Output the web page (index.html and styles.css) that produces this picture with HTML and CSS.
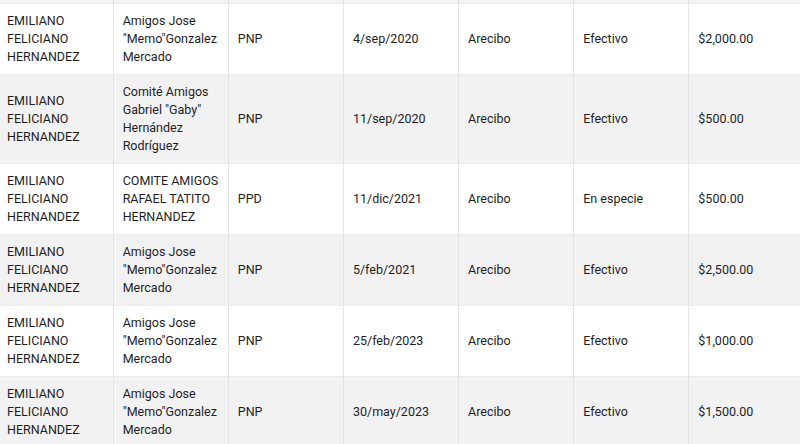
FILE: index.html
```html
<!DOCTYPE html>
<html lang="es">
<head>
<meta charset="utf-8">
<link rel="stylesheet" href="styles.css">
</head>
<body>
<div class="wrap">
<table class="donations">
  <colgroup>
    <col class="c"><col class="c"><col class="c"><col class="c"><col class="c"><col class="c"><col class="c">
  </colgroup>
  <tbody>
    <tr class="stub"><td></td><td></td><td></td><td></td><td></td><td></td><td></td></tr>
    <tr><td>EMILIANO FELICIANO HERNANDEZ</td><td>Amigos Jose "Memo"Gonzalez Mercado</td><td>PNP</td><td>4/sep/2020</td><td>Arecibo</td><td>Efectivo</td><td>$2,000.00</td></tr>
    <tr><td>EMILIANO FELICIANO HERNANDEZ</td><td>Comité Amigos Gabriel "Gaby" Hernández Rodríguez</td><td>PNP</td><td>11/sep/2020</td><td>Arecibo</td><td>Efectivo</td><td>$500.00</td></tr>
    <tr><td>EMILIANO FELICIANO HERNANDEZ</td><td>COMITE AMIGOS RAFAEL TATITO HERNANDEZ</td><td>PPD</td><td>11/dic/2021</td><td>Arecibo</td><td>En especie</td><td>$500.00</td></tr>
    <tr><td>EMILIANO FELICIANO HERNANDEZ</td><td>Amigos Jose "Memo"Gonzalez Mercado</td><td>PNP</td><td>5/feb/2021</td><td>Arecibo</td><td>Efectivo</td><td>$2,500.00</td></tr>
    <tr><td>EMILIANO FELICIANO HERNANDEZ</td><td>Amigos Jose "Memo"Gonzalez Mercado</td><td>PNP</td><td>25/feb/2023</td><td>Arecibo</td><td>Efectivo</td><td>$1,000.00</td></tr>
    <tr><td>EMILIANO FELICIANO HERNANDEZ</td><td>Amigos Jose "Memo"Gonzalez Mercado</td><td>PNP</td><td>30/may/2023</td><td>Arecibo</td><td>Efectivo</td><td>$1,500.00</td></tr>
  </tbody>
</table>
</div>
</body>
</html>
```

FILE: styles.css
```css
html, body {
  margin: 0;
  padding: 0;
  background: #ffffff;
  overflow: hidden;
}

.wrap {
  margin-left: -2px;
}

.donations {
  border-collapse: collapse;
  table-layout: fixed;
  width: 806px;
  font-family: Roboto, "Liberation Sans", Arial, sans-serif;
  font-size: 12.5px;
  line-height: 18px;
  color: #1e1e1e;
}

.donations .c {
  width: 115px;
}

.donations td {
  padding: 8px 9px;
  vertical-align: middle;
  text-align: left;
  border-left: 1px solid #e4e4e4;
  border-top: 1px solid #ececec;
}

.donations td:first-child {
  border-left: none;
}

.donations tr:nth-child(odd) td {
  background: #f2f2f2;
}

.donations tr:nth-child(even) td {
  background: #ffffff;
}

.donations tr.stub td {
  padding: 0;
  height: 3px;
  border-top: none;
}
```
